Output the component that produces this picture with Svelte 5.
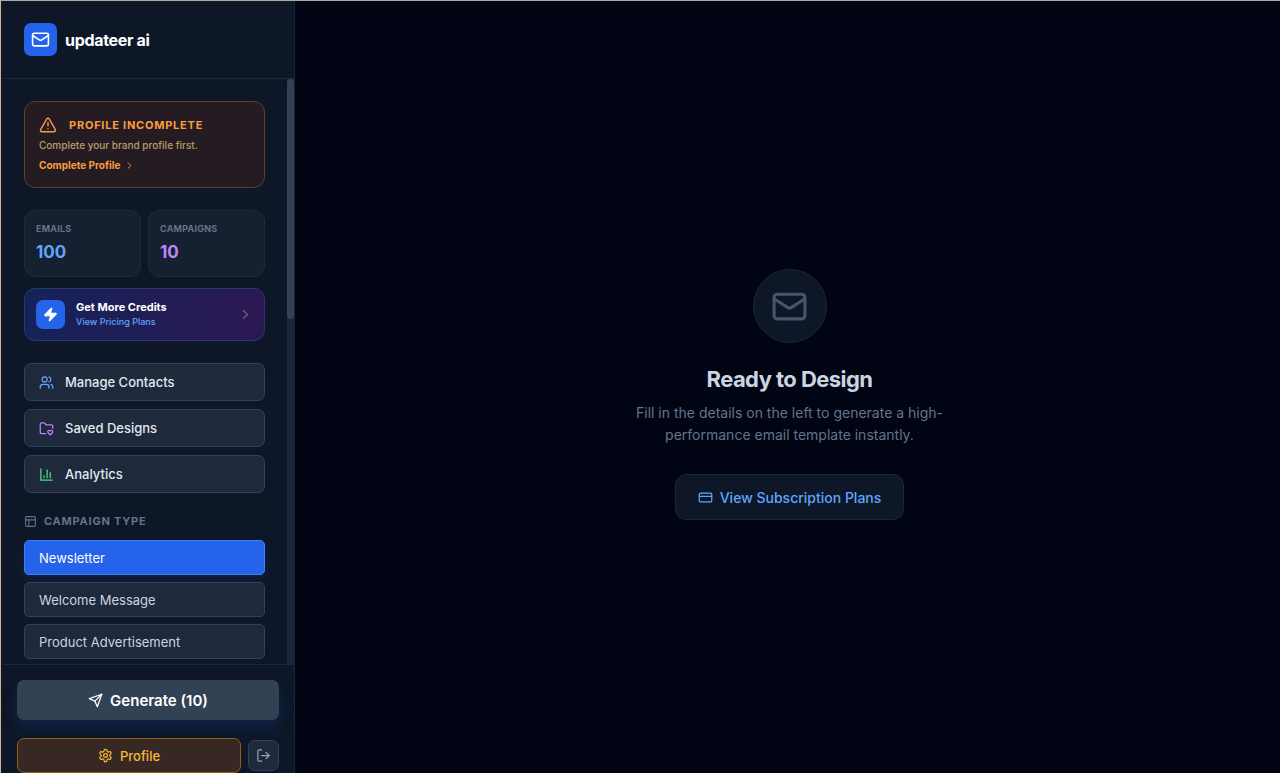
<script lang="ts">
  const icons = {
    mail: ['M4 4h16a2 2 0 0 1 2 2v12a2 2 0 0 1-2 2H4a2 2 0 0 1-2-2V6a2 2 0 0 1 2-2z', 'm22 7-8.97 5.7a1.94 1.94 0 0 1-2.06 0L2 7'],
    alert: ['m21.73 18-8-14a2 2 0 0 0-3.48 0l-8 14A2 2 0 0 0 4 21h16a2 2 0 0 0 1.73-3', 'M12 9v4', 'M12 17h.01'],
    chevron: ['m9 18 6-6-6-6'],
    zap: ['M4 14a1 1 0 0 1-.78-1.63l9.9-10.2a.5.5 0 0 1 .86.46l-1.92 6.02A1 1 0 0 0 13 10h7a1 1 0 0 1 .78 1.63l-9.9 10.2a.5.5 0 0 1-.86-.46l1.92-6.02A1 1 0 0 0 11 14z'],
    users: ['M16 21v-2a4 4 0 0 0-4-4H6a4 4 0 0 0-4 4v2', 'M5 7a4 4 0 1 0 8 0a4 4 0 1 0-8 0', 'M22 21v-2a4 4 0 0 0-3-3.87', 'M16 3.13a4 4 0 0 1 0 7.75'],
    folder: ['M10.638 20H4a2 2 0 0 1-2-2V5a2 2 0 0 1 2-2h3.9a2 2 0 0 1 1.69.9l.81 1.2a2 2 0 0 0 1.67.9H20a2 2 0 0 1 2 2v3.417', 'M14.62 18.8A2.25 2.25 0 1 1 18 15.836a2.25 2.25 0 1 1 3.38 2.966l-2.626 2.856a.998.998 0 0 1-1.507 0z'],
    chart: ['M3 3v18h18', 'M18 17V9', 'M13 17V5', 'M8 17v-3'],
    layout: ['M5 3h14a2 2 0 0 1 2 2v14a2 2 0 0 1-2 2H5a2 2 0 0 1-2-2V5a2 2 0 0 1 2-2z', 'M3 9h18', 'M9 21V9'],
    send: ['m22 2-7 20-4-9-9-4Z', 'M22 2 11 13'],
    settings: ['M12.22 2h-.44a2 2 0 0 0-2 2v.18a2 2 0 0 1-1 1.73l-.43.25a2 2 0 0 1-2 0l-.15-.08a2 2 0 0 0-2.73.73l-.22.38a2 2 0 0 0 .73 2.73l.15.1a2 2 0 0 1 1 1.72v.51a2 2 0 0 1-1 1.74l-.15.09a2 2 0 0 0-.73 2.73l.22.38a2 2 0 0 0 2.73.73l.15-.08a2 2 0 0 1 2 0l.43.25a2 2 0 0 1 1 1.73V20a2 2 0 0 0 2 2h.44a2 2 0 0 0 2-2v-.18a2 2 0 0 1 1-1.73l.43-.25a2 2 0 0 1 2 0l.15.08a2 2 0 0 0 2.73-.73l.22-.39a2 2 0 0 0-.73-2.73l-.15-.08a2 2 0 0 1-1-1.74v-.5a2 2 0 0 1 1-1.74l.15-.09a2 2 0 0 0 .73-2.73l-.22-.38a2 2 0 0 0-2.73-.73l-.15.08a2 2 0 0 1-2 0l-.43-.25a2 2 0 0 1-1-1.73V4a2 2 0 0 0-2-2z', 'M9 12a3 3 0 1 0 6 0a3 3 0 1 0-6 0'],
    logout: ['M9 21H5a2 2 0 0 1-2-2V5a2 2 0 0 1 2-2h4', 'm16 17 5-5-5-5', 'M21 12H9'],
    card: ['M4 5h16a2 2 0 0 1 2 2v10a2 2 0 0 1-2 2H4a2 2 0 0 1-2-2V7a2 2 0 0 1 2-2z', 'M2 10h20']
  };

  type IconName = keyof typeof icons;

  const links: { label: string; icon: IconName; tone: string }[] = [
    { label: 'Manage Contacts', icon: 'users', tone: 'blue' },
    { label: 'Saved Designs', icon: 'folder', tone: 'purple' },
    { label: 'Analytics', icon: 'chart', tone: 'green' }
  ];

  const campaignTypes = ['Newsletter', 'Welcome Message', 'Product Advertisement'];
  let selected = $state('Newsletter');
</script>

{#snippet icon(name: IconName, size: number)}
  <svg class="icon" width={size} height={size} viewBox="0 0 24 24" aria-hidden="true">
    {#each icons[name] as d}
      <path {d} />
    {/each}
  </svg>
{/snippet}

<div class="page">
  <aside class="sidebar">
    <header class="brand">
      <span class="logo">{@render icon('mail', 19)}</span>
      <span class="brand-name">updateer ai</span>
    </header>

    <div class="body">
      <div class="content">
        <section class="alert">
          <h2>{@render icon('alert', 18)} Profile Incomplete</h2>
          <p>Complete your brand profile first.</p>
          <a href="#profile">Complete Profile {@render icon('chevron', 11)}</a>
        </section>

        <div class="stats">
          <div class="stat">
            <span class="stat-label">Emails</span>
            <span class="stat-value blue">100</span>
          </div>
          <div class="stat">
            <span class="stat-label">Campaigns</span>
            <span class="stat-value purple">10</span>
          </div>
        </div>

        <a class="credits" href="#pricing">
          <span class="credits-icon">{@render icon('zap', 15)}</span>
          <span class="credits-text">
            <strong>Get More Credits</strong>
            <small>View Pricing Plans</small>
          </span>
          {@render icon('chevron', 15)}
        </a>

        <nav class="links">
          {#each links as link}
            <button type="button" class="link">
              <span class="link-icon {link.tone}">{@render icon(link.icon, 15)}</span>
              {link.label}
            </button>
          {/each}
        </nav>

        <h3 class="section-title">{@render icon('layout', 13)} Campaign Type</h3>
        <div class="types">
          {#each campaignTypes as type}
            <button
              type="button"
              class="type"
              class:active={selected === type}
              onclick={() => (selected = type)}
            >
              {type}
            </button>
          {/each}
        </div>
      </div>
      <div class="track"><div class="thumb"></div></div>
    </div>

    <footer class="actions">
      <button type="button" class="generate">{@render icon('send', 15)} Generate (10)</button>
      <div class="account">
        <button type="button" class="profile">{@render icon('settings', 15)} Profile</button>
        <button type="button" class="logout" aria-label="Log out">{@render icon('logout', 15)}</button>
      </div>
    </footer>
  </aside>

  <main class="preview">
    <div class="circle">{@render icon('mail', 37)}</div>
    <h1>Ready to Design</h1>
    <p>Fill in the details on the left to generate a high-performance email template instantly.</p>
    <a class="plans" href="#plans">{@render icon('card', 15)} View Subscription Plans</a>
  </main>
</div>

<style>
  :global(body) {
    height: 100vh;
    overflow: hidden;
    background: #010413;
  }

  .page {
    box-sizing: border-box;
    display: flex;
    height: calc(100vh + 15px);
    border-top: 1px solid #aaa9a0;
    border-left: 1px solid #cbb49c;
    background: #010413;
    color: #e2e8f0;
    font-family: Inter, 'Liberation Sans', sans-serif;
  }

  .page * {
    box-sizing: border-box;
  }

  h1, h2, h3, p {
    margin: 0;
  }

  button {
    font-family: inherit;
    cursor: pointer;
  }

  a {
    text-decoration: none;
  }

  .icon {
    flex: none;
    fill: none;
    stroke: currentColor;
    stroke-width: 2;
    stroke-linecap: round;
    stroke-linejoin: round;
  }

  .blue { color: #60a5fa; }
  .purple { color: #c084fc; }
  .green { color: #4ade80; }

  /* Sidebar */
  .sidebar {
    display: flex;
    flex: none;
    flex-direction: column;
    width: 294px;
    border-left: 1px solid #111820;
    border-right: 1px solid #1b2537;
    background: #0d1728;
  }

  .brand {
    display: flex;
    align-items: center;
    gap: 8px;
    padding: 22px;
    border-bottom: 1px solid #1c293a;
  }

  .logo {
    display: grid;
    place-items: center;
    width: 33px;
    height: 33px;
    border-radius: 7px;
    background: #2563eb;
    color: #fff;
  }

  .brand-name {
    color: #fff;
    font-size: 16px;
    font-weight: 700;
    letter-spacing: -0.02em;
  }

  .body {
    display: flex;
    flex: 1;
    min-height: 0;
  }

  .content {
    flex: 1;
    padding: 22px;
    overflow-y: auto;
    scrollbar-width: none;
  }

  .track {
    flex: none;
    width: 7px;
    background: #1c2539;
  }

  .thumb {
    height: 41%;
    border-radius: 4px;
    background: #334155;
  }

  .alert {
    padding: 14px;
    border: 1px solid #633f20;
    border-radius: 11px;
    background: #241c22;
  }

  .alert h2 {
    display: flex;
    align-items: center;
    gap: 12px;
    color: #fb9d3c;
    font-size: 11px;
    font-weight: 700;
    line-height: 18px;
    letter-spacing: 0.07em;
    text-transform: uppercase;
  }

  .alert p {
    margin-top: 4px;
    color: #b89c69;
    font-size: 10px;
    font-weight: 500;
    line-height: 15px;
  }

  .alert a {
    display: flex;
    align-items: center;
    gap: 4px;
    margin-top: 5px;
    color: #fb9d3c;
    font-size: 10px;
    font-weight: 700;
    line-height: 15px;
  }

  .stats {
    display: grid;
    grid-template-columns: 1fr 1fr;
    gap: 7px;
    margin-top: 22px;
  }

  .stat {
    display: flex;
    flex-direction: column;
    gap: 4px;
    padding: 11px;
    border: 1px solid #1f2b3c;
    border-radius: 11px;
    background: #152031;
  }

  .stat-label {
    color: #64748b;
    font-size: 9px;
    font-weight: 700;
    line-height: 14px;
    letter-spacing: 0.025em;
    text-transform: uppercase;
  }

  .stat-value {
    font-size: 17px;
    font-weight: 700;
    line-height: 25px;
  }

  .credits {
    display: flex;
    align-items: center;
    gap: 11px;
    margin-top: 11px;
    padding: 11px;
    border: 1px solid #273a70;
    border-radius: 11px;
    background: linear-gradient(90deg, #15225a, #2c1852);
    color: #64648b;
  }

  .credits-icon {
    display: grid;
    place-items: center;
    width: 29px;
    height: 29px;
    border-radius: 7px;
    background: #2563eb;
    color: #fff;
  }

  .credits-icon .icon {
    fill: currentColor;
  }

  .credits-text {
    display: flex;
    flex: 1;
    flex-direction: column;
  }

  .credits strong {
    color: #fff;
    font-size: 11px;
    font-weight: 700;
    line-height: 15px;
  }

  .credits small {
    color: #60a5fa;
    font-size: 9px;
    font-weight: 500;
    line-height: 14px;
  }

  .links,
  .types {
    display: flex;
    flex-direction: column;
  }

  .links {
    gap: 8px;
    margin-top: 22px;
  }

  .types {
    gap: 7px;
  }

  .link {
    display: flex;
    align-items: center;
    gap: 11px;
    height: 38px;
    padding: 0 14px;
    border: 1px solid #334155;
    border-radius: 7px;
    background: #1e293b;
    color: #e2e8f0;
    font-size: 13px;
    font-weight: 500;
  }

  .link-icon {
    display: flex;
  }

  .section-title {
    display: flex;
    align-items: center;
    gap: 7px;
    margin: 20px 0 11px;
    color: #64748b;
    font-size: 11px;
    font-weight: 700;
    line-height: 16px;
    letter-spacing: 0.07em;
    text-transform: uppercase;
  }

  .type {
    height: 35px;
    padding: 0 14px;
    border: 1px solid #334155;
    border-radius: 5px;
    background: #1e293b;
    color: #cbd5e1;
    font-size: 13px;
    text-align: left;
  }

  .type.active {
    border-color: #3b82f6;
    background: #2563eb;
    color: #fff;
    box-shadow: 0 8px 14px rgba(30, 58, 138, 0.2);
  }

  /* Sidebar actions */
  .actions {
    padding: 15px;
    border-top: 1px solid #1c293a;
  }

  .generate {
    display: flex;
    align-items: center;
    justify-content: center;
    gap: 7px;
    width: 100%;
    height: 40px;
    border: 0;
    border-radius: 7px;
    background: #334155;
    color: #fff;
    font-size: 15px;
    font-weight: 600;
    box-shadow: 0 8px 14px rgba(30, 58, 138, 0.3);
  }

  .account {
    display: flex;
    align-items: center;
    gap: 7px;
    margin-top: 18px;
  }

  .profile {
    display: flex;
    flex: 1;
    align-items: center;
    justify-content: center;
    gap: 7px;
    height: 35px;
    border: 1px solid #92600f;
    border-radius: 7px;
    background: #382824;
    color: #f5b93a;
    font-size: 13px;
    font-weight: 500;
  }

  .logout {
    display: grid;
    place-items: center;
    width: 31px;
    height: 31px;
    padding: 0;
    border: 1px solid #334155;
    border-radius: 7px;
    background: #1e293b;
    color: #94a3b8;
  }

  /* Empty state */
  .preview {
    display: flex;
    flex: 1;
    flex-direction: column;
    align-items: center;
    justify-content: center;
    padding: 0 18px 0 22px;
    text-align: center;
  }

  .circle {
    display: grid;
    place-items: center;
    width: 74px;
    height: 74px;
    border: 1px solid #1b2638;
    border-radius: 50%;
    background: #0d1728;
    color: #475569;
  }

  .preview h1 {
    margin-top: 21px;
    color: #cbd5e1;
    font-size: 22px;
    font-weight: 700;
    line-height: 30px;
    letter-spacing: -0.025em;
  }

  .preview p {
    max-width: 330px;
    margin-top: 8px;
    color: #64748b;
    font-size: 14px;
    line-height: 22px;
  }

  .plans {
    display: flex;
    align-items: center;
    gap: 7px;
    height: 46px;
    margin-top: 28px;
    padding: 0 22px;
    border: 1px solid #1b2638;
    border-radius: 11px;
    background: #0d1728;
    color: #60a5fa;
    font-size: 14px;
    font-weight: 500;
  }
</style>
